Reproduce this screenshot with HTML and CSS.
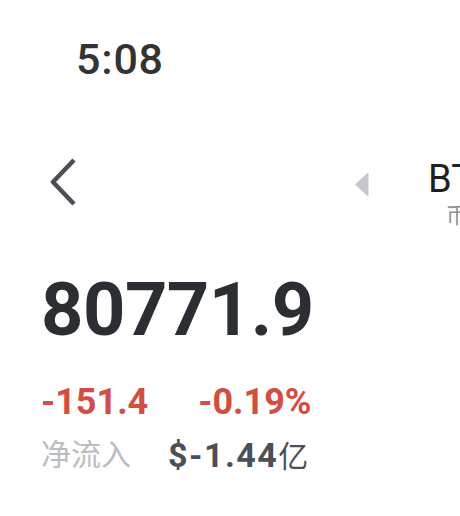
FILE: index.html
```html
<!DOCTYPE html>
<html lang="zh-CN">
<head>
  <meta charset="UTF-8">
  <meta name="viewport" content="width=device-width, initial-scale=1.0">
  <title>BTCUSDT</title>
  <link rel="stylesheet" href="styles.css">
</head>
<body>

  <div class="status-bar">
    <span class="time">5:08</span>
  </div>

  <div class="header">
    <svg class="back" width="28" height="50" viewBox="0 0 28 50">
      <path d="M24 3 L3 25 L24 47" fill="none" stroke="#4b4e54" stroke-width="4.5" stroke-linejoin="round"/>
    </svg>
    <div class="coin">
      <svg class="prev" width="16" height="28" viewBox="0 0 16 28">
        <path d="M2.5 14.5 L15 3 L15 26 Z" fill="#c5c7ca" stroke="#c5c7ca" stroke-width="1" stroke-linejoin="round"/>
      </svg>
      <div class="coin-name">
        <div class="symbol">BTCUSDT</div>
        <div class="exchange">币安永续</div>
      </div>
    </div>
  </div>

  <div class="quote">
    <div class="price">80771.9</div>
    <div class="change">
      <span>-151.4</span>
      <span>-0.19%</span>
    </div>
    <div class="flow">
      <span class="label">净流入</span>
      <span class="value">$-1.44<span class="unit">亿</span></span>
    </div>
  </div>

</body>
</html>
```

FILE: styles.css
```css
html, body {
  overflow: hidden;
}

body {
  margin: 0;
  width: 460px;
  height: 516px;
  background: #fff;
  font-family: Roboto, "Noto Sans CJK SC", sans-serif;
}

.status-bar {
  padding: 35px 0 0 76px;
}

.time {
  display: block;
  font-size: 43px;
  line-height: 48px;
  font-weight: 500;
  letter-spacing: 0.8px;
  color: #333;
}

.header {
  display: flex;
  align-items: flex-start;
  margin-top: 74px;
  padding-left: 50px;
  white-space: nowrap;
}

.back {
  flex-shrink: 0;
}

.coin {
  display: flex;
  align-items: flex-start;
  flex-shrink: 0;
  margin-left: 275px;
  gap: 59px;
}

.prev {
  margin-top: 13px;
  flex-shrink: 0;
}

.symbol {
  font-size: 38px;
  line-height: 44px;
  color: #1f1f1f;
}

.exchange {
  padding-left: 18px;
  font-size: 22px;
  line-height: 30px;
  color: #909398;
}

.quote {
  margin-top: 39px;
  padding-left: 41px;
}

.price {
  font-size: 74px;
  line-height: 80px;
  font-weight: 700;
  letter-spacing: -0.5px;
  color: #2b2e33;
}

.change {
  display: flex;
  gap: 50px;
  margin-top: 31px;
  font-size: 36px;
  line-height: 42px;
  font-weight: 700;
  color: #d24e42;
}

.flow {
  display: flex;
  gap: 37px;
  margin-top: 12px;
  line-height: 40px;
}

.label {
  font-size: 30px;
  color: #b9bcc1;
}

.value {
  font-size: 34px;
  font-weight: 700;
  letter-spacing: 1.5px;
  color: #4b4f56;
}

.unit {
  font-size: 30px;
  font-weight: 400;
  letter-spacing: 0;
}
```
